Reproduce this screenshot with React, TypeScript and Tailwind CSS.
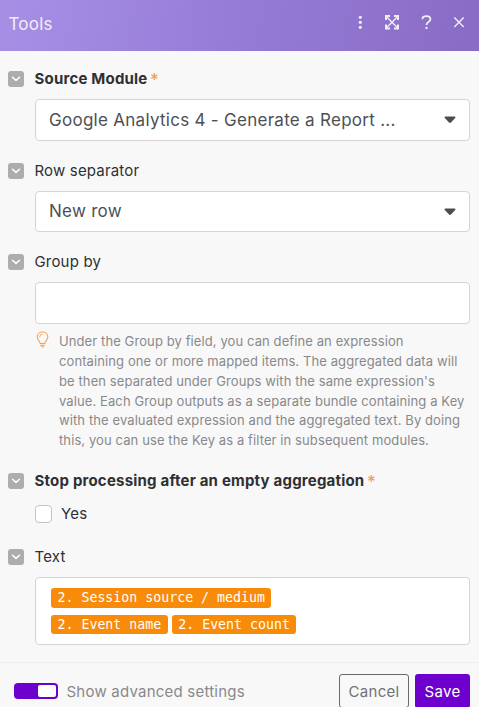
import React from 'react';

interface FieldLabelProps {
    text: string;
    required?: boolean;
    className?: string;
}

const FieldLabel: React.FC<FieldLabelProps> = ({ text, required, className = '' }) => {
    return (
        <div className={`flex items-start gap-[10.5px] pl-2 ${className}`}>
            <div className="flex w-4 h-4 shrink-0 items-center justify-center rounded-[3px] bg-[#adadad]">
                <svg width="10" height="6" viewBox="0 0 10 6" fill="none" stroke="#fff" strokeWidth="1.5" strokeLinecap="round" strokeLinejoin="round">
                    <path d="M1.5 1.2 5 4.4l3.5-3.2" />
                </svg>
            </div>
            <div className={`flex whitespace-nowrap text-[15px] leading-4 text-[#2f3033] ${required ? 'font-bold tracking-[0.2px]' : 'tracking-[0.17px]'}`}>
                {text}
                {required && <span className="ml-[2.5px] text-[17px] leading-[18px] font-medium text-[#f9a04b]">*</span>}
            </div>
        </div>
    );
};

const SelectBox: React.FC<{ value: string; className?: string }> = ({ value, className = '' }) => {
    return (
        <div className={`ml-[35px] mr-[9px] flex items-center justify-between rounded border border-[#d5d5d5] bg-white pl-[13px] pr-[13px] ${className}`}>
            <span className="whitespace-nowrap pt-px text-[17px] tracking-[0.28px] text-[#4d4f54]">{value}</span>
            <svg width="12" height="8" viewBox="0 0 12 8" fill="#4a4e54">
                <path d="M1.4.5h9.2c.8 0 1.2 1 .6 1.6L7 6.6c-.6.6-1.4.6-2 0L.8 2.1C.2 1.5.6.5 1.4.5Z" />
            </svg>
        </div>
    );
};

const Chip: React.FC<{ children: React.ReactNode }> = ({ children }) => {
    return (
        <span className="flex h-[19.5px] items-center whitespace-pre rounded-[3px] bg-[#f88c0a] px-[6.5px] font-['DejaVu_Sans_Mono',monospace] text-[13.25px] leading-none text-white">
            {children}
        </span>
    );
};

const HELP_LINES = [
    'Under the Group by field, you can define an expression',
    'containing one or more mapped items. The aggregated data will',
    "be then separated under Groups with the same expression's",
    'value. Each Group outputs as a separate bundle containing a Key',
    'with the evaluated expression and the aggregated text. By doing',
    'this, you can use the Key as a filter in subsequent modules.',
];

const Header = () => {
    return (
        <header className="flex h-[51px] items-start justify-between bg-linear-100 from-[#a78fe6] via-[#967bd6] to-[#886bc5] pl-[8.5px] text-[#f0eef5]">
            <h1 className="mt-3 text-[17px] leading-6 tracking-[0.2px]">Tools</h1>
            <div className="mr-[13px] mt-[14px] flex items-center">
                <svg className="mr-4" width="16" height="16" viewBox="0 0 16 16" fill="currentColor">
                    <circle cx="8.3" cy="3.3" r="1.6" />
                    <circle cx="8.3" cy="8.3" r="1.6" />
                    <circle cx="8.3" cy="13.3" r="1.6" />
                </svg>
                <svg className="mr-[19px]" width="16" height="16" viewBox="0 0 16 16" fill="none" stroke="currentColor" strokeWidth="2">
                    <path d="M2 6V2h4M10 2h4v4M14 10.500v4h-4M6 14.500H2v-4" />
                    <path d="m2 2.300 12 12M14 2.300l-12 12" strokeWidth="1.400" />
                </svg>
                <svg className="mr-[17px]" width="16" height="16" viewBox="0 0 16 16" fill="none" stroke="currentColor" strokeWidth="1.8">
                    <path d="M3.4 5.3C3.4 3 5 2.100 7.400 2.100s4 1.100 4 3.200c0 2.500-3.900 2.700-3.900 5.600" />
                    <circle cx="7.5" cy="13.9" r="1.2" fill="currentColor" stroke="none" />
                </svg>
                <svg width="14" height="14" viewBox="0 0 14 14" fill="none" stroke="currentColor" strokeWidth="1.4">
                    <path d="m2.300 2.600 9.400 9.400M11.700 2.600l-9.400 9.400" />
                </svg>
            </div>
        </header>
    );
};

const Footer = () => {
    return (
        <footer className="flex h-[45px] items-start border-t border-[#eeeeee] pl-[14px]">
            <div className="mt-5 flex h-4 w-11 shrink-0 justify-end rounded bg-[#6d00cc] p-[2px]">
                <div className="h-3 w-[18px] rounded-[2px] bg-white" />
            </div>
            <span className="ml-[8.5px] mt-[18px] whitespace-nowrap text-[15px] leading-[22px] tracking-[0.22px] text-[#88898c]">Show advanced settings</span>
            <button className="ml-auto mt-[11px] h-[34px] w-[70px] rounded-[3px] border border-[#696a6d] pt-[2px] text-[15px] tracking-[0.3px] text-[#717276]">Cancel</button>
            <button className="ml-[6px] mr-[9px] mt-[11px] h-[34px] w-[55px] rounded-[3px] bg-[#6d00cc] pt-[2px] text-[15px] tracking-[0.3px] text-white">Save</button>
        </footer>
    );
};

const App: React.FC = () => {
    return (
        <div className="flex h-[707px] w-[479px] flex-col overflow-hidden bg-[#f8f8f8] font-[Inter,sans-serif]">
            <Header />

            <main className="h-[611px]">
                <FieldLabel text="Source Module" required className="h-12 pt-5" />
                <SelectBox value="Google Analytics 4 - Generate a Report ..." className="h-[42px]" />

                <FieldLabel text="Row separator" className="h-[50px] pt-[22px]" />
                <SelectBox value="New row" className="h-[41px]" />

                <FieldLabel text="Group by" className="h-[50px] pt-[22px]" />
                <div className="ml-[35px] mr-[9px] h-[42px] rounded border border-[#d5d5d5] bg-white" />
                <div className="flex h-[149px] items-start pl-[36px]">
                    <svg className="mt-[7px] shrink-0" width="13" height="17" viewBox="0 0 13 17" fill="none" stroke="#fba052" strokeWidth="1.1" strokeLinecap="round">
                        <path d="M4.2 12.500c0-2.200-3-3.500-3-6.700C1.200 2.900 3.500 1 6.500 1s5.300 1.900 5.300 4.800c0 3.200-3 4.500-3 6.700Z" />
                        <path d="M3.700 5.800c.1-1.500.9-2.300 2.300-2.500M4.500 14.200h4M5.500 15.800h2" />
                    </svg>
                    <p className="ml-[10px] mt-[8px] text-[13px] leading-[19.85px] tracking-[0.1px] text-[#88898b]">
                        {HELP_LINES.map((line) => (
                            <span key={line} className="block whitespace-nowrap">{line}</span>
                        ))}
                    </p>
                </div>

                <FieldLabel text="Stop processing after an empty aggregation" required className="h-8" />
                <div className="flex h-[44px] items-start pl-[35px]">
                    <div className="h-[18px] w-[17px] rounded border border-[#c4c4c4] bg-white" />
                    <span className="ml-[9px] text-[15px] leading-[18px] tracking-[0.2px] text-[#2f3033]">Yes</span>
                </div>

                <FieldLabel text="Text" className="h-7" />
                <div className="ml-[35px] mr-[9px] flex h-[68px] flex-col gap-[7px] rounded border border-[#d5d5d5] bg-white pl-[15px] pt-[10px]">
                    <div className="flex gap-1">
                        <Chip>2. Session source / medium</Chip>
                    </div>
                    <div className="flex gap-1">
                        <Chip>2. Event name</Chip>
                        <Chip>2. Event count</Chip>
                    </div>
                </div>
            </main>

            <Footer />
        </div>
    );
};

export default App;
